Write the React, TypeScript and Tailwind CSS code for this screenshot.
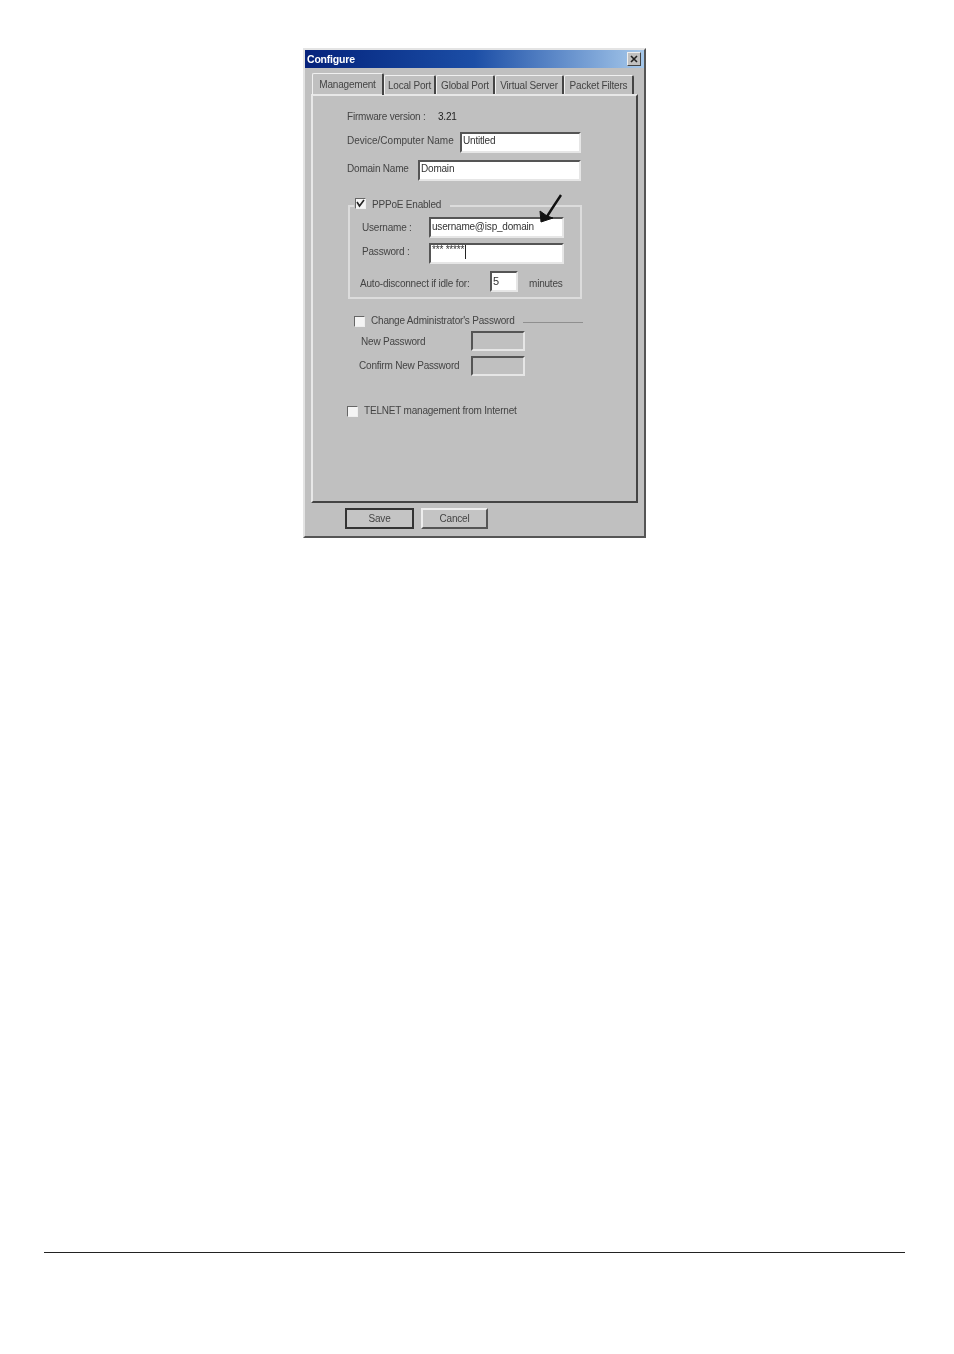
import type { ReactNode } from "react";

const sunken = "border-2 border-t-[#555] border-l-[#555] border-r-[#e6e6e6] border-b-[#e6e6e6]";

function Check({ checked = false, className = "" }: { checked?: boolean; className?: string }) {
  return (
    <span className={`flex h-[11px] w-[11px] shrink-0 items-center justify-center border border-t-[#666] border-l-[#666] border-r-[#eee] border-b-[#eee] bg-[#f4f4f4] ${className}`}>
      {checked && (
        <svg width="9" height="9" viewBox="0 0 9 9">
          <path d="M1 3 L3.5 7 L8 1" fill="none" stroke="#222" strokeWidth="1.6" />
        </svg>
      )}
    </span>
  );
}

function Input({ className, children }: { className: string; children?: ReactNode }) {
  return (
    <div className={`${sunken} flex shrink-0 items-start bg-white pl-[1px] text-[#333] ${className}`}>
      {children}
    </div>
  );
}

function Tab({ label, w, active = false }: { label: string; w: string; active?: boolean }) {
  return (
    <div
      className={`flex items-center justify-center rounded-t-[2px] border-t border-l border-t-[#f0f0f0] border-l-[#f0f0f0] border-r-2 border-r-[#444] ${w} ${
        active ? "relative z-10 -mb-[1px] h-[22px]" : "h-[19px] pt-[1px]"
      }`}
    >
      {label}
    </div>
  );
}

export default function App() {
  return (
    <div className="flex min-h-[1354px] flex-col bg-white font-['Liberation_Sans',Arial,sans-serif]">
      <div className="flex justify-start pl-[303px] pt-[48px]">
        {/* dialog */}
        <div className="h-[490px] w-[343px] border-2 border-t-[#e4e4e4] border-l-[#e4e4e4] border-r-[#555] border-b-[#555] bg-[#c0c0c0] text-[10px] leading-[12px] tracking-[-0.2px] text-[#444] blur-[0.6px]">
          <div className="flex h-[18px] items-center justify-between bg-gradient-to-r from-[#06227c] via-[#1c4ea6] to-[#a6c8ea] pl-[2px] pr-[3px]">
            <span className="text-[10.5px] font-bold text-white">Configure</span>
            <span className="flex h-[14px] w-[14px] items-center justify-center border border-t-[#eee] border-l-[#eee] border-r-[#444] border-b-[#444] bg-[#c0c0c0]">
              <svg width="8" height="8" viewBox="0 0 8 8">
                <path d="M1 1 L7 7 M7 1 L1 7" stroke="#222" strokeWidth="1.6" />
              </svg>
            </span>
          </div>

          {/* tabs */}
          <div className="mt-[3px] box-content flex h-[20px] items-end pl-[7px] pt-[3px]">
            <Tab label="Management" w="w-[72px]" active />
            <Tab label="Local Port" w="w-[52px]" />
            <Tab label="Global Port" w="w-[59px]" />
            <Tab label="Virtual Server" w="w-[69px]" />
            <Tab label="Packet Filters" w="w-[70px]" />
          </div>

          <div className="ml-[6px] h-[409px] w-[327px] border-2 border-t-[#e8e8e8] border-l-[#e8e8e8] border-r-[#444] border-b-[#444] pl-[34px] pt-[14px]">
            <div className="flex h-[14px] items-center">
              <span className="w-[91px]">Firmware version :</span>
              <span className="text-[#222]">3.21</span>
            </div>

            <div className="mt-[8px] flex h-[21px] items-center">
              <span className="w-[113px] shrink-0 pb-[4px] tracking-normal">Device/Computer Name</span>
              <Input className="h-[21px] w-[121px] pt-[1px]">Untitled</Input>
            </div>
            <div className="mt-[7px] flex h-[21px] items-center">
              <span className="w-[71px] shrink-0 pb-[4px]">Domain Name</span>
              <Input className="h-[21px] w-[163px] pt-[1px]">Domain</Input>
            </div>

            {/* PPPoE group */}
            <div className="relative ml-[1px] mt-[24px] h-[94px] w-[234px] border-2 border-[#dcdcdc] pl-[12px]">
              <div className="-ml-[8px] -mt-[8px] flex h-[12px] w-[96px] items-center gap-[6px] bg-[#c0c0c0] pl-[1px]">
                <Check checked className="-mt-[4px]" />
                <span>PPPoE Enabled</span>
              </div>
              <div className="mt-[6px] flex h-[21px] items-center">
                <span className="w-[67px] shrink-0">Username :</span>
                <Input className="h-[21px] w-[135px] pt-[2px]">username@isp_domain</Input>
              </div>
              <div className="mt-[5px] flex h-[21px] items-center">
                <span className="w-[67px] shrink-0 pb-[4px]">Password :</span>
                <Input className="h-[21px] w-[135px]">
                  <span className="leading-[9px]">*** *****</span>
                  <span className="ml-[1px] h-[14px] w-[1px] bg-[#222]" />
                </Input>
              </div>
              <div className="-ml-[2px] mt-[7px] flex h-[21px] items-center">
                <span className="w-[130px] shrink-0 pt-[4px]">Auto-disconnect if idle for:</span>
                <Input className="h-[21px] w-[28px] pt-[2px] text-[11px]">5</Input>
                <span className="ml-[11px] pt-[4px]">minutes</span>
              </div>
              {/* hand drawn arrow */}
              <svg className="absolute left-[188px] top-[-13px]" width="26" height="32" viewBox="0 0 26 32">
                <path d="M23 1 C19 7 15 13 8 24" fill="none" stroke="#111" strokeWidth="2.4" />
                <path d="M2 17 L3 28 L15 24 L9 22 Z" fill="#111" stroke="#111" strokeWidth="1" />
              </svg>
            </div>

            {/* admin password group */}
            <div className="ml-[7px] mt-[16px] flex h-[12px] items-center">
              <Check />
              <span className="ml-[6px] w-[152px] shrink-0">Change Administrator's Password</span>
              <span className="mt-[3px] h-[1px] max-w-[60px] flex-1 bg-[#8f8f8f]" />
            </div>
            <div className="ml-[14px] mt-[4px] flex h-[20px] items-center">
              <span className="w-[110px] shrink-0 pt-[2px]">New Password</span>
              <div className={`${sunken} h-[20px] w-[54px]`} />
            </div>
            <div className="ml-[12px] mt-[5px] flex h-[20px] items-center">
              <span className="w-[112px] shrink-0">Confirm New Password</span>
              <div className={`${sunken} h-[20px] w-[54px]`} />
            </div>

            <div className="mt-[29px] flex h-[12px] items-center gap-[6px]">
              <Check />
              <span>TELNET management from Internet</span>
            </div>
          </div>

          {/* buttons */}
          <div className="mt-[5px] flex gap-[7px] pl-[40px]">
            <button className="flex h-[21px] w-[69px] items-center justify-center border-2 border-[#333] bg-[#c4c4c4]">Save</button>
            <button className="flex h-[21px] w-[67px] items-center justify-center border-2 border-t-[#eee] border-l-[#eee] border-r-[#555] border-b-[#555] bg-[#c4c4c4]">Cancel</button>
          </div>
        </div>
      </div>

      <div className="ml-[44px] mt-[714px] h-[1px] w-[861px] bg-[#222]" />
    </div>
  );
}
